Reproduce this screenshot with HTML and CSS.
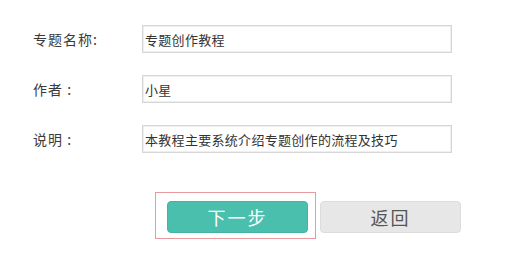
FILE: index.html
```html
<!DOCTYPE html>
<html lang="zh-CN">
<head>
<meta charset="utf-8">
<link rel="stylesheet" href="styles.css">
</head>
<body>
<div class="form">
  <div class="row">
    <label class="label">专题名称:</label>
    <div class="input">专题创作教程</div>
  </div>
  <div class="row">
    <label class="label">作者 :</label>
    <div class="input">小星</div>
  </div>
  <div class="row">
    <label class="label">说明 :</label>
    <div class="input">本教程主要系统介绍专题创作的流程及技巧</div>
  </div>
  <div class="actions">
    <div class="highlight">
      <button class="btn btn-primary">下一步</button>
    </div>
    <button class="btn btn-default">返回</button>
  </div>
</div>
</body>
</html>
```
FILE: styles.css
```css
html, body {
  margin: 0;
  padding: 0;
  background: #ffffff;
}
body {
  width: 530px;
  height: 253px;
  overflow: hidden;
  font-family: "Noto Sans CJK SC", "Noto Sans", sans-serif;
}
.form {
  padding: 25px 0 0 33px;
  display: flex;
  flex-direction: column;
  gap: 22px;
}
.row {
  display: flex;
  align-items: center;
  height: 28px;
}
.label {
  width: 109px;
  font-size: 14px;
  color: #3a3a3a;
  letter-spacing: 1px;
}
.input {
  box-sizing: border-box;
  width: 310px;
  height: 28px;
  border: 1px solid #d6d6d6;
  box-shadow: inset 0 0 0 1px #efefef;
  padding: 0 2px;
  display: flex;
  align-items: center;
  font-size: 13px;
  color: #333;
  letter-spacing: 0.3px;
}
.actions {
  display: flex;
  align-items: flex-start;
  gap: 4px;
  margin-top: 17px;
  padding-left: 122px;
}
.highlight {
  border: 1px solid #e89a9e;
  padding: 8px 7px 5px 11px;
}
.btn {
  box-sizing: border-box;
  width: 141px;
  height: 32px;
  border-radius: 4px;
  font-family: "Noto Sans CJK SC", "Noto Sans", sans-serif;
  font-size: 18px;
  letter-spacing: 2px;
  padding: 0;
  cursor: pointer;
}
.btn-primary {
  background: #4bbfae;
  border: 1px solid #45b3a3;
  color: #ffffff;
}
.btn-default {
  margin-top: 9px;
  background: #e7e7e7;
  border: 1px solid #dcdcdc;
  color: #555555;
}
```
